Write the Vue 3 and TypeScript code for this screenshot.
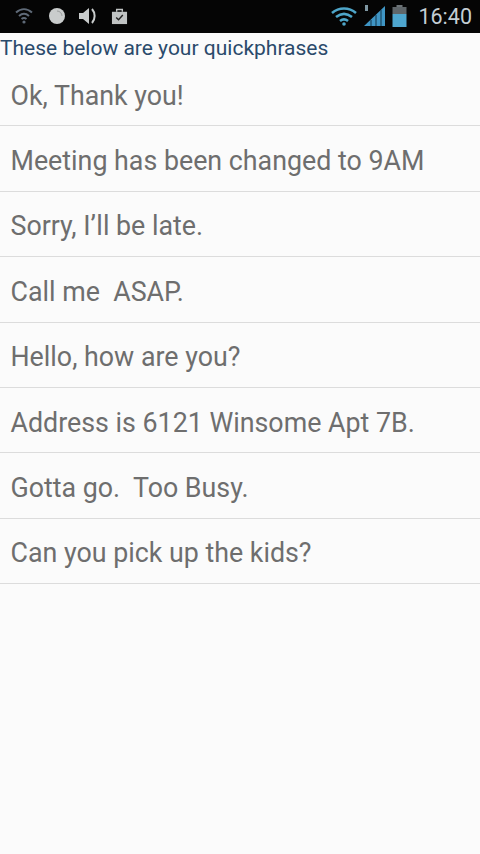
<script setup lang="ts">
const phrases: string[] = [
  'Ok, Thank you!',
  'Meeting has been changed to 9AM',
  'Sorry, I’ll be late.',
  'Call me\u00a0 ASAP.',
  'Hello, how are you?',
  'Address is 6121 Winsome Apt 7B.',
  'Gotta go.\u00a0 Too Busy.',
  'Can you pick up the kids?',
]
</script>

<template>
  <div class="screen">
    <header class="status">
      <div class="group left">
        <svg class="ic wifi-l" viewBox="0 0 20 20" fill="none" stroke="#5f6a78" stroke-width="2">
          <path d="M2 6.500c5-4.500 11-4.500 16 0" />
          <path d="M5 10c3.200-2.800 6.800-2.800 10 0" />
          <path d="M7.500 13c1.600-1.300 3.400-1.300 5 0" />
          <circle cx="10" cy="16" r="1.600" fill="#5f6a78" stroke="none" />
        </svg>
        <svg class="ic dot" viewBox="0 0 18 18">
          <circle cx="9" cy="9" r="8" fill="#c9cccc" />
          <path d="M9 4a5 5 0 0 1 5 5" fill="none" stroke="#9a9d9d" stroke-width="1" />
        </svg>
        <svg class="ic vol" viewBox="0 0 22 20">
          <path d="M1 7h4l6-5v16l-6-5H1z" fill="#c9cccc" />
          <path d="M14 3c3.500 4 3.500 10 0 14" fill="none" stroke="#c9cccc" stroke-width="2" />
        </svg>
        <svg class="ic bag" viewBox="0 0 18 18">
          <path d="M1 4h16v13H1z" fill="#c0c3c3" />
          <path d="M6 4V1.500h6V4" fill="none" stroke="#c0c3c3" stroke-width="1.500" />
          <path d="M5.500 10l2.500 2.500 4.500-5" fill="none" stroke="#222" stroke-width="1.500" />
        </svg>
      </div>
      <div class="group right">
        <svg class="ic wifi-r" viewBox="0 0 28 20" fill="none" stroke="#4ea6c9" stroke-width="2.600">
          <path d="M2 7c7-6 17-6 24 0" />
          <path d="M6 11c5-4 11-4 16 0" />
          <path d="M10 15c2.500-2 5.500-2 8 0" />
          <circle cx="14" cy="18" r="1.800" fill="#4ea6c9" stroke="none" />
        </svg>
        <svg class="ic signal" viewBox="0 0 22 22">
          <rect x="1" y="0" width="3" height="6" fill="#7f97a3" />
          <path d="M0 21l21-20v20z" fill="#3f95c4" />
          <path d="M7 15v6M12 10v11M17 5v16" stroke="#12344a" stroke-width="1" />
        </svg>
        <svg class="ic batt" viewBox="0 0 14 22">
          <rect x="4" y="0" width="6" height="3" fill="#6d7478" />
          <rect x="0" y="2" width="14" height="7" fill="#5f666a" />
          <rect x="0" y="9" width="14" height="13" fill="#4ea6cf" />
        </svg>
        <span class="time">16:40</span>
      </div>
    </header>
    <div class="title">These below are your quickphrases</div>
    <ul class="list">
      <li v-for="p in phrases" :key="p" class="row">{{ p }}</li>
    </ul>
  </div>
</template>

<style scoped>
.screen {
  width: 480px;
  height: 854px;
  background: #fbfbfb;
  font-family: Roboto, "Liberation Sans", sans-serif;
  overflow: hidden;
}
.status {
  height: 33px;
  background: #050505;
  display: flex;
  justify-content: space-between;
  align-items: center;
  padding: 0 8px 1px 14px;
  box-sizing: border-box;
}
.group { display: flex; align-items: center; }
.left { gap: 12px; }
.right { gap: 6px; }
.ic { display: block; }
.wifi-l { width: 20px; height: 20px; margin-right: 2px; }
.dot { width: 18px; height: 18px; }
.vol { width: 22px; height: 20px; }
.bag { width: 17px; height: 17px; margin-left: -1px; }
.wifi-r { width: 28px; height: 20px; }
.signal { width: 22px; height: 22px; }
.batt { width: 15px; height: 22px; }
.time { color: #c3ced4; font-size: 21.500px; margin-left: 5px; }
.title {
  color: #2a4a6b;
  font-size: 21px;
  line-height: 30px;
  padding-left: 0;
}
.list { list-style: none; margin: -2px 0 0; padding: 0; }
.row {
  height: 65.400px;
  box-sizing: border-box;
  border-bottom: 1.500px solid #dcdcdc;
  color: #6e6e6e;
  font-size: 26.800px;
  padding: 5px 0 0 10.500px;
  display: flex;
  align-items: center;
}
</style>
